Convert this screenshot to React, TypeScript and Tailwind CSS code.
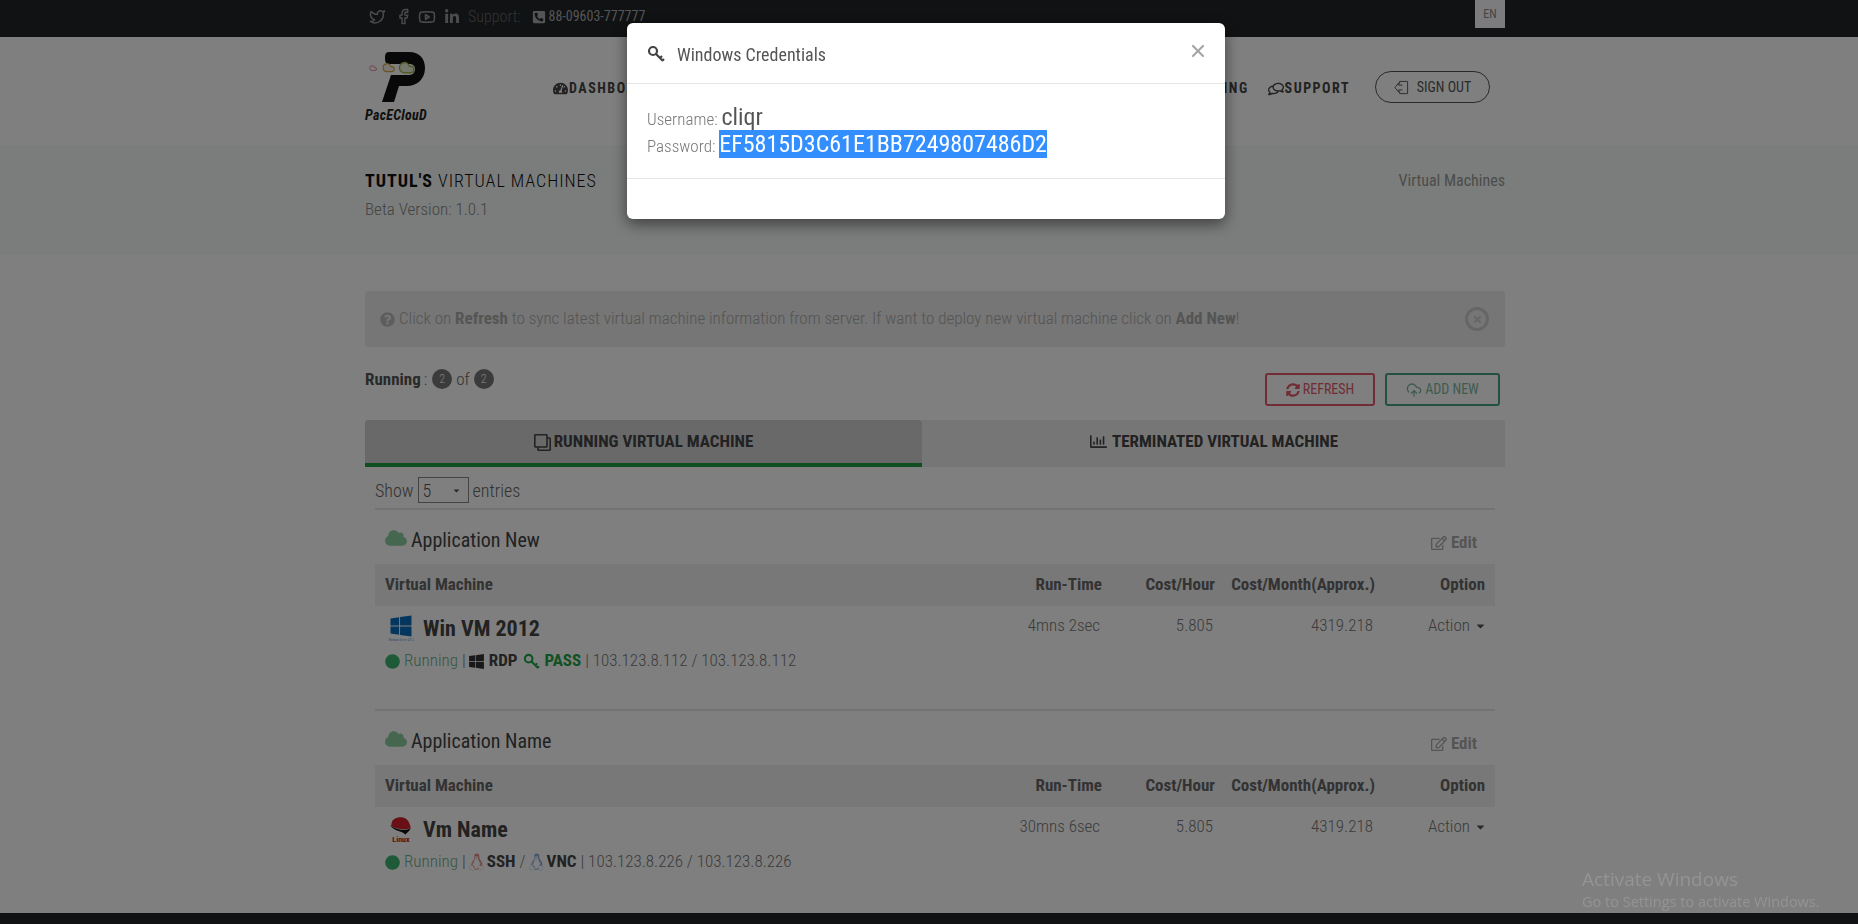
import React from "react";
import { Twitter, Facebook, Youtube, CloudUpload, X } from "lucide-react";
import {
  FaLinkedinIn,
  FaPhoneSquareAlt,
  FaTachometerAlt,
  FaRegComments,
  FaQuestionCircle,
  FaRegClone,
  FaRegChartBar,
  FaSyncAlt,
  FaRegEdit,
  FaCloud,
  FaWindows,
  FaLinux,
  FaCircle,
  FaCaretDown,
  FaTimes,
} from "react-icons/fa";

function KeyIcon({ className }: { className?: string }) {
  return (
    <svg viewBox="0 0 18 18" fill="none" stroke="currentColor" strokeWidth="2.2" className={className}>
      <circle cx="6" cy="6" r="4" />
      <path d="M9 9l7 7M13 13l2-2M15.5 15.5l1.5-1.5" />
    </svg>
  );
}

const cloudPath = "M17.5 19H9a7 7 0 1 1 6.71-9h1.79a4.5 4.5 0 1 1 0 9Z";

function Logo() {
  return (
    <div className="flex w-[188px] flex-col">
      <svg viewBox="0 0 66 54" className="h-[54px] w-[66px]">
        <path
          fill="#111"
          d="M24 2H44C55 2 60 9 60 18C60 29 52 36 42 36H34L29 52H17L26 25H44C48 25 50 22 50 19C50 16 48 14 44 14H24C21 14 20 12 20 8C20 4 21 2 24 2Z"
        />
        <g fill="none" strokeWidth="2">
          <path d={cloudPath} stroke="#d9536a" transform="translate(4 14) scale(0.34)" />
          <path d={cloudPath} stroke="#d8a64d" fill="#f3f1e4" transform="translate(17 11) scale(0.56)" />
          <path d={cloudPath} stroke="#9db84f" fill="#e9eedb" transform="translate(33 9) scale(0.72)" />
        </g>
      </svg>
      <span className="mt-[3px] text-[14px] leading-[16px] font-bold text-[#222] italic tracking-[0.3px]">PacEClouD</span>
    </div>
  );
}

function VmCard({ app, name, os, status }: { app: string; name: string; os: React.ReactNode; status: React.ReactNode }) {
  const time = name === "Win VM 2012" ? "4mns 2sec" : "30mns 6sec";
  return (
    <div className="h-[201px] border-b-2 border-[#e6e6e6] last:border-b-0">
      <div className="flex h-[54px] items-center justify-between pl-[10px] pr-[18px] pt-[6px]">
        <div className="flex items-center gap-[4px] text-[20px] text-[#444]">
          <FaCloud className="mb-[4px] h-[18px] w-[22px] text-[#8bcf9f]" />
          {app}
        </div>
        <div className="mt-[6px] flex items-center gap-[4px] text-[17px] font-bold text-[#aaa]">
          <FaRegEdit className="h-[16px] w-[16px]" /> Edit
        </div>
      </div>
      <div className="grid h-[42px] grid-cols-[1fr_102px_113px_160px_110px] items-center bg-[#f0f0f0] px-[10px] text-right text-[17px] font-bold text-[#666]">
        <span className="text-left">Virtual Machine</span>
        <span>Run-Time</span>
        <span>Cost/Hour</span>
        <span>Cost/Month(Approx.)</span>
        <span>Option</span>
      </div>
      <div className="grid grid-cols-[1fr_102px_113px_160px_110px] items-start px-[10px] pt-[4px] text-right text-[17px] font-light text-[#777]">
        <div className="text-left">
          <div className="flex h-[36px] items-center gap-[6px]">
            <div className="flex w-[32px] justify-center">{os}</div>
            <span className="text-[22px] font-bold text-[#444]">{name}</span>
          </div>
          <div className="mt-[3px] flex h-[24px] items-center gap-[4px]">{status}</div>
        </div>
        <span className="mt-[3px] pr-[2px]">{time}</span>
        <span className="mt-[3px] pr-[2px]">5.805</span>
        <span className="mt-[3px] pr-[2px]">4319.218</span>
        <span className="mt-[3px] flex items-center justify-end gap-[6px] text-[#777]">
          Action <FaCaretDown className="h-[12px] w-[9px] text-[#555]" />
        </span>
      </div>
    </div>
  );
}

function Running() {
  return (
    <>
      <FaCircle className="h-[15px] w-[15px] text-[#3cb371]" />
      <span className="text-[#6fae89]">Running</span>
      <span>|</span>
    </>
  );
}

export default function App() {
  return (
    <div className="relative flex h-screen flex-col overflow-hidden bg-white font-['Roboto',sans-serif] [font-stretch:condensed]">
      {/* top bar */}
      <div className="h-[37px] shrink-0 bg-[#222428]">
        <div className="ml-[365px] flex w-[1140px] justify-between">
          <div className="flex h-[33px] items-center pl-[4px] text-[#999]">
            <Twitter className="h-[17px] w-[17px]" />
            <Facebook className="ml-[9px] h-[17px] w-[17px]" />
            <Youtube className="ml-[6px] h-[18px] w-[18px]" />
            <FaLinkedinIn className="ml-[8px] h-[16px] w-[16px]" />
            <span className="ml-[8px] text-[16px] font-light text-[#666]">Support:</span>
            <span className="ml-[11px] flex items-center gap-[3px] text-[14px] text-[#aaa]">
              <FaPhoneSquareAlt className="h-[14px] w-[14px]" /> 88-09603-777777
            </span>
          </div>
          <div className="flex h-[28px] w-[30px] items-center justify-center bg-[#f8f8fc] text-[12px] text-[#888]">EN</div>
        </div>
      </div>

      {/* header */}
      <div className="h-[108px] shrink-0">
        <div className="ml-[365px] flex h-full w-[1140px] items-start pt-[13px]">
          <Logo />
          <nav className="mt-[28px] flex flex-1 items-center gap-[30px] pr-[155px] text-[14px] font-bold tracking-[1.5px] text-[#444]">
            <span className="flex items-center gap-[1px]">
              <FaTachometerAlt className="h-[15px] w-[15px]" />
              DASHBOARD
            </span>
            <span>VIRTUAL MACHINE</span>
            <span className="ml-auto">BILLING</span>
            <span className="-ml-[11px] flex items-center gap-[1px]">
              <FaRegComments className="h-[16px] w-[16px] -scale-x-100" />
              SUPPORT
            </span>
          </nav>
          <div className="absolute left-[1375px] top-[71px] flex h-[32px] w-[115px] items-center justify-center gap-[8px] rounded-full border border-[#555] text-[14px] text-[#555]">
            <svg viewBox="0 0 16 16" fill="none" stroke="currentColor" className="h-[15px] w-[15px]">
              <path d="M6 4V1.5h8.5v13H6V12M9 5.5H5V3L1 8l4 5v-2.5h4" />
            </svg>
            SIGN OUT
          </div>
        </div>
      </div>

      {/* page title */}
      <div className="h-[110px] shrink-0 bg-[#f5faf7]">
        <div className="ml-[365px] flex w-[1140px] justify-between pt-[25px]">
          <div>
            <div className="text-[18px] leading-[22px] tracking-[0.95px] text-[#111]">
              <b>TUTUL'S</b> <span className="font-light">VIRTUAL MACHINES</span>
            </div>
            <div className="mt-[7px] text-[17px] leading-[20px] font-light text-[#888]">Beta Version: 1.0.1</div>
          </div>
          <div className="text-[16px] leading-[22px] text-[#999]">Virtual Machines</div>
        </div>
      </div>

      {/* main */}
      <div className="ml-[365px] w-[1140px] flex-1">
        <div className="mt-[36px] flex h-[56px] items-center justify-between rounded-[3px] bg-[#ececec] pl-[15px] pr-[16px] text-[17px] font-light text-[#aaa]">
          <div className="flex items-center gap-[4px]">
            <FaQuestionCircle className="h-[15px] w-[15px] text-[#bbb]" />
            <span>
              Click on <b className="font-bold">Refresh</b> to sync latest virtual machine information from server. If want to deploy new virtual machine click on <b className="font-bold">Add New</b>!
            </span>
          </div>
          <div className="flex h-[24px] w-[24px] items-center justify-center rounded-full border-[3px] border-[#ccc]">
            <FaTimes className="h-[11px] w-[11px] text-[#ccc]" />
          </div>
        </div>

        <div className="flex h-[73px] justify-between pr-[5px]">
          <div className="mt-[21px] flex h-[24px] items-center gap-[4px] text-[17px] font-light text-[#666]">
            <b className="font-bold text-[#555]">Running</b>
            <span className="-ml-[1px] mr-[1px]">:</span>
            <span className="-mt-[2px] flex h-[20px] w-[20px] items-center justify-center rounded-full bg-[#777] text-[12px] text-[#eee]">2</span>
            of
            <span className="-mt-[2px] flex h-[20px] w-[20px] items-center justify-center rounded-full bg-[#777] text-[12px] text-[#eee]">2</span>
          </div>
          <div className="mt-[26px] flex gap-[10px] text-[14px]">
            <div className="flex h-[33px] w-[110px] items-center justify-center gap-[3px] rounded-[3px] border-2 border-[#e2596b] text-[#e2596b]">
              <FaSyncAlt className="h-[14px] w-[14px]" /> REFRESH
            </div>
            <div className="flex h-[33px] w-[115px] items-center justify-center gap-[3px] rounded-[3px] border-2 border-[#45a383] text-[#7bb8a3]">
              <CloudUpload className="h-[16px] w-[16px]" /> ADD NEW
            </div>
          </div>
        </div>

        <div className="flex h-[47px] text-[17px] font-bold text-[#444]">
          <div className="flex w-[557px] items-center justify-center gap-[3px] rounded-t-[3px] border-b-[4px] border-[#1f9d3d] bg-[#d2d2d2] pt-[1px]">
            <FaRegClone className="h-[17px] w-[17px] -scale-x-100" /> RUNNING VIRTUAL MACHINE
          </div>
          <div className="flex flex-1 items-center justify-center gap-[4px] border-b border-[#e8e8e8] bg-[#ececec] pb-[3px]">
            <FaRegChartBar className="h-[17px] w-[19px]" /> TERMINATED VIRTUAL MACHINE
          </div>
        </div>

        <div className="mx-[10px]">
          <div className="flex h-[43px] items-center gap-[4px] border-b-2 border-[#e6e6e6] pt-[5px] text-[18px] font-light text-[#666]">
            Show
            <div className="flex h-[26px] w-[51px] items-center justify-between border border-[#888] pl-[4px] pr-[8px] text-[#555]">
              5 <FaCaretDown className="h-[9px] w-[7px]" />
            </div>
            entries
          </div>
          <VmCard
            app="Application New"
            name="Win VM 2012"
            os={
              <div className="flex flex-col items-center">
                <FaWindows className="h-[24px] w-[24px] text-[#0a6ebd]" />
                <span className="text-[3px] leading-[4px] text-[#0a6ebd]">Windows Server 2012</span>
              </div>
            }
            status={
              <>
                <Running />
                <FaWindows className="-ml-[2px] h-[17px] w-[17px] text-[#333]" />
                <b className="font-bold text-[#444]">RDP</b>
                <KeyIcon className="ml-[2px] h-[17px] w-[17px] text-[#1ea446]" />
                <b className="font-bold text-[#1ea446]">PASS</b>
                <span>| 103.123.8.112 / 103.123.8.112</span>
              </>
            }
          />
          <VmCard
            app="Application Name"
            name="Vm Name"
            os={
              <div className="flex flex-col items-center">
                <svg viewBox="0 0 24 18" className="h-[22px] w-[26px]">
                  <path d="M3 9C3 3 7 1 12 1C17 1 20 5 21 11C15 13 8 12 3 9Z" fill="#d0202a" />
                  <path d="M2 8C6 12 15 14 21 11C20 14 17 15 16 17C14 13 6 15 2 8Z" fill="#111" />
                </svg>
                <span className="-mt-[1px] text-[8px] leading-[7px] font-bold text-[#c4131e]">Linux</span>
              </div>
            }
            status={
              <>
                <Running />
                <FaLinux className="-mx-[1px] h-[18px] w-[15px] text-[#e08a8a]" />
                <b className="font-bold text-[#444]">SSH</b>
                <span>/</span>
                <FaLinux className="-mx-[1px] h-[18px] w-[15px] text-[#8aa7d8]" />
                <b className="font-bold text-[#444]">VNC</b>
                <span>| 103.123.8.226 / 103.123.8.226</span>
              </>
            }
          />
        </div>
      </div>

      {/* footer */}
      <div className="h-[11px] shrink-0 bg-[#222428]" />

      {/* dim */}
      <div className="fixed inset-0 bg-black/50" />

      {/* watermark */}
      <div className="pointer-events-none fixed left-[1582px] top-[866px] font-['Open_Sans',sans-serif] text-[#949494] [font-stretch:normal]">
        <div className="text-[19px] leading-[26px]">Activate Windows</div>
        <div className="text-[14.5px] leading-[20px]">Go to Settings to activate Windows.</div>
      </div>

      {/* modal */}
      <div className="fixed left-[627px] top-[23px] h-[196px] w-[598px] rounded-[6px] bg-white shadow-[0_5px_15px_rgba(0,0,0,0.5)]">
        <div className="flex h-[61px] items-center justify-between border-b border-[#e5e5e5] pl-[20px] pr-[17px] pt-[2px]">
          <div className="flex items-center gap-[12px] text-[18px] text-[#555]">
            <KeyIcon className="h-[18px] w-[18px] text-[#444]" />
            Windows Credentials
          </div>
          <X strokeWidth={2.6} className="mb-[6px] h-[20px] w-[20px] text-[#a5a5a5]" />
        </div>
        <div className="h-[95px] border-b border-[#e5e5e5] px-[20px] pt-[21px] text-[17px] leading-[25px] font-light text-[#777]">
          <div>
            Username: <span className="text-[24px] font-normal text-[#555]">cliqr</span>
          </div>
          <div>
            Password: <span className="bg-[#338fff] text-[24px] font-normal text-white">EF5815D3C61E1BB7249807486D2</span>
          </div>
        </div>
      </div>
    </div>
  );
}
